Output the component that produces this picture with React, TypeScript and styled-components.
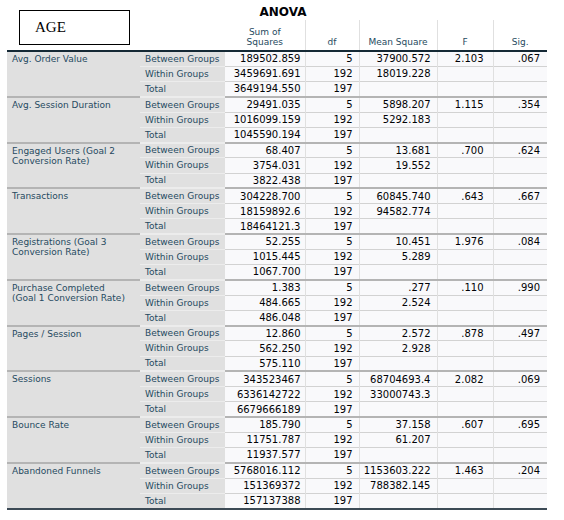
import React from 'react';
import styled, { createGlobalStyle } from 'styled-components';

const GlobalStyle = createGlobalStyle`
  html, body {
    margin: 0;
    padding: 0;
    background: #ffffff;
  }
`;

type Group = {
  name: string[];
  rows: [string, string, string, string, string][];
};

const groupLabels = ['Between Groups', 'Within Groups', 'Total'];

const data: Group[] = [
  {
    name: ['Avg. Order Value'],
    rows: [
      ['189502.859', '5', '37900.572', '2.103', '.067'],
      ['3459691.691', '192', '18019.228', '', ''],
      ['3649194.550', '197', '', '', ''],
    ],
  },
  {
    name: ['Avg. Session Duration'],
    rows: [
      ['29491.035', '5', '5898.207', '1.115', '.354'],
      ['1016099.159', '192', '5292.183', '', ''],
      ['1045590.194', '197', '', '', ''],
    ],
  },
  {
    name: ['Engaged Users (Goal 2', 'Conversion Rate)'],
    rows: [
      ['68.407', '5', '13.681', '.700', '.624'],
      ['3754.031', '192', '19.552', '', ''],
      ['3822.438', '197', '', '', ''],
    ],
  },
  {
    name: ['Transactions'],
    rows: [
      ['304228.700', '5', '60845.740', '.643', '.667'],
      ['18159892.6', '192', '94582.774', '', ''],
      ['18464121.3', '197', '', '', ''],
    ],
  },
  {
    name: ['Registrations (Goal 3', 'Conversion Rate)'],
    rows: [
      ['52.255', '5', '10.451', '1.976', '.084'],
      ['1015.445', '192', '5.289', '', ''],
      ['1067.700', '197', '', '', ''],
    ],
  },
  {
    name: ['Purchase Completed', '(Goal 1 Conversion Rate)'],
    rows: [
      ['1.383', '5', '.277', '.110', '.990'],
      ['484.665', '192', '2.524', '', ''],
      ['486.048', '197', '', '', ''],
    ],
  },
  {
    name: ['Pages / Session'],
    rows: [
      ['12.860', '5', '2.572', '.878', '.497'],
      ['562.250', '192', '2.928', '', ''],
      ['575.110', '197', '', '', ''],
    ],
  },
  {
    name: ['Sessions'],
    rows: [
      ['343523467', '5', '68704693.4', '2.082', '.069'],
      ['6336142722', '192', '33000743.3', '', ''],
      ['6679666189', '197', '', '', ''],
    ],
  },
  {
    name: ['Bounce Rate'],
    rows: [
      ['185.790', '5', '37.158', '.607', '.695'],
      ['11751.787', '192', '61.207', '', ''],
      ['11937.577', '197', '', '', ''],
    ],
  },
  {
    name: ['Abandoned Funnels'],
    rows: [
      ['5768016.112', '5', '1153603.222', '1.463', '.204'],
      ['151369372', '192', '788382.145', '', ''],
      ['157137388', '197', '', '', ''],
    ],
  },
];

// right padding of each numeric column, the way SPSS aligns them
const numPad = [4, 6, 6, 9, 7];

const Page = styled.div`
  position: relative;
  padding: 0 0 0 7px;
  font-family: 'DejaVu Sans', Verdana, sans-serif;
`;

const AgeBox = styled.div`
  position: absolute;
  left: 19px;
  top: 10px;
  width: 111px;
  height: 35px;
  box-sizing: border-box;
  border: 1px solid #000;
  background: #fff;
  font-family: 'Liberation Serif', 'Times New Roman', serif;
  font-size: 15px;
  color: #000;
  display: flex;
  align-items: center;
  padding-left: 15px;
`;

const Table = styled.table`
  border-collapse: collapse;
  table-layout: fixed;
  width: 540px;
`;

const Title = styled.th`
  height: 16px;
  padding: 4px 0 0 12px;
  font-size: 12px;
  font-weight: bold;
  color: #010205;
  text-align: center;
  vertical-align: middle;
`;

const HeadCell = styled.th<{ $line?: boolean }>`
  height: 27px;
  padding: 0 2px 3px;
  font-size: 9px;
  font-weight: normal;
  line-height: 10px;
  color: #264a60;
  text-align: center;
  vertical-align: bottom;
  border-left: ${(p) => (p.$line ? '1px solid #e0e0e0' : 'none')};
  border-bottom: 2px solid #152935;
`;

const Row = styled.tr<{ $first: boolean }>`
  height: 15.25px;
  & > td {
    border-top: ${(p) => (p.$first ? '2px solid #b4b4b4' : '1px solid #d2d2d2')};
  }
  &:first-child > td {
    border-top: none;
  }
`;

const LabelCell = styled.td<{ $last: boolean }>`
  background: #e0e0e0;
  color: #264a60;
  font-size: 9px;
  line-height: 10px;
  padding: 2px 4px 0 5px;
  vertical-align: top;
  white-space: nowrap;
  overflow: hidden;
  border-bottom: ${(p) => (p.$last ? '2px solid #3c4a55' : 'none')};
`;

const GroupCell = styled.td<{ $last: boolean }>`
  background: #e0e0e0;
  color: #264a60;
  font-size: 9px;
  padding: 0 0 0 5px;
  vertical-align: middle;
  white-space: nowrap;
  border-top-color: #ececec !important;
  border-bottom: ${(p) => (p.$last ? '2px solid #3c4a55' : 'none')};
`;

const NumCell = styled.td<{ $pad: number; $line: boolean; $last: boolean }>`
  background: #f9f9fb;
  color: #010205;
  font-size: 10px;
  text-align: right;
  padding: 0 ${(p) => p.$pad}px 0 0;
  vertical-align: middle;
  white-space: nowrap;
  border-left: ${(p) => (p.$line ? '1px solid #e0e0e0' : 'none')};
  border-bottom: ${(p) => (p.$last ? '2px solid #3c4a55' : 'none')};
`;

export default function App() {
  return (
    <>
      <GlobalStyle />
      <Page>
        <Table>
          <colgroup>
            <col style={{ width: 133 }} />
            <col style={{ width: 85 }} />
            <col style={{ width: 80 }} />
            <col style={{ width: 54 }} />
            <col style={{ width: 78 }} />
            <col style={{ width: 56 }} />
            <col style={{ width: 54 }} />
          </colgroup>
          <thead>
            <tr>
              <Title colSpan={7}>ANOVA</Title>
            </tr>
            <tr>
              <HeadCell colSpan={2} />
              <HeadCell>
                Sum of
                <br />
                Squares
              </HeadCell>
              <HeadCell $line>df</HeadCell>
              <HeadCell $line>Mean Square</HeadCell>
              <HeadCell $line>F</HeadCell>
              <HeadCell $line>Sig.</HeadCell>
            </tr>
          </thead>
          <tbody>
            {data.map((g, gi) => {
              const lastGroup = gi === data.length - 1;
              return g.rows.map((r, ri) => {
                const last = lastGroup && ri === 2;
                return (
                  <Row key={`${gi}-${ri}`} $first={ri === 0}>
                    {ri === 0 && (
                      <LabelCell rowSpan={3} $last={lastGroup}>
                        {g.name.map((n, i) => (
                          <div key={i}>{n}</div>
                        ))}
                      </LabelCell>
                    )}
                    <GroupCell $last={last}>{groupLabels[ri]}</GroupCell>
                    {r.map((v, ci) => (
                      <NumCell key={ci} $pad={numPad[ci]} $line={ci > 0} $last={last}>
                        {v}
                      </NumCell>
                    ))}
                  </Row>
                );
              });
            })}
          </tbody>
        </Table>
        <AgeBox>AGE</AgeBox>
      </Page>
    </>
  );
}
